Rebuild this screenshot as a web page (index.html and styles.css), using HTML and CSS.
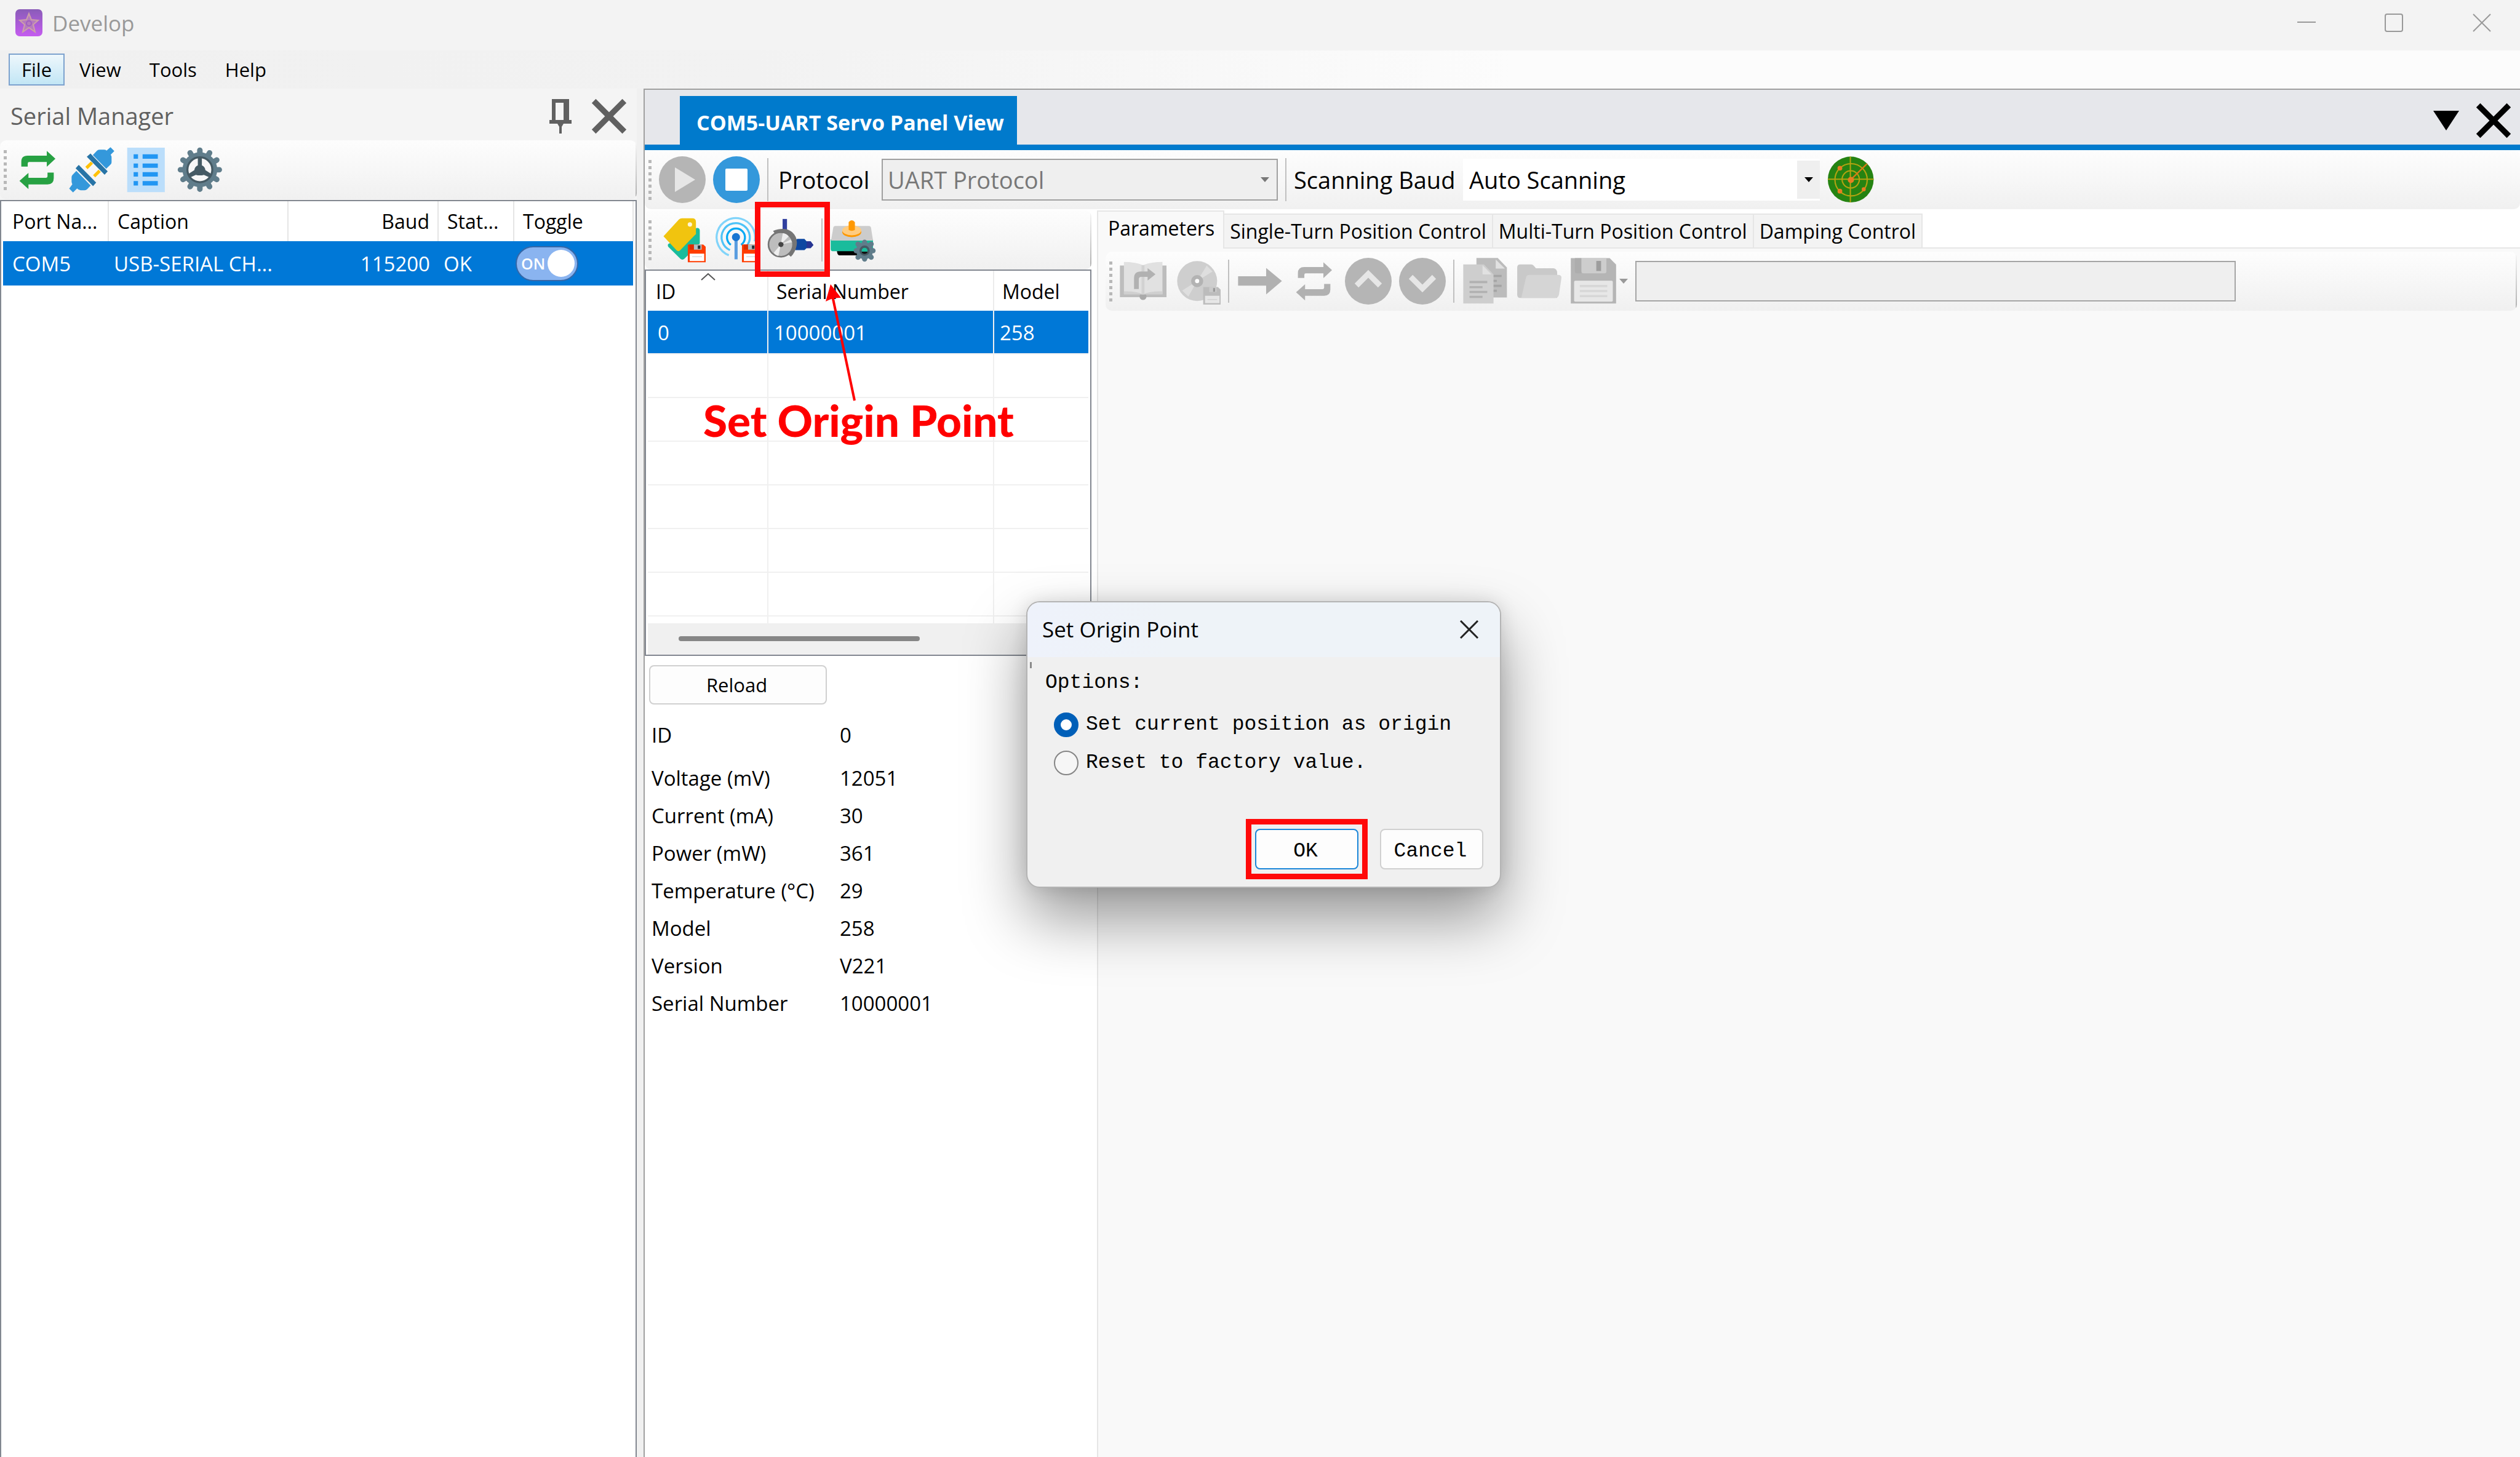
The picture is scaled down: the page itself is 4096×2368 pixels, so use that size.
FILE: index.html
```html
<!DOCTYPE html>
<html lang="en">
<head>
<meta charset="utf-8">
<title>Develop</title>
<link rel="stylesheet" href="styles.css">
</head>
<body>
<svg class="defs" aria-hidden="true">
  <symbol id="cross" viewBox="0 0 56 56"><path d="M4 4L52 52M52 4L4 52" fill="none" stroke="currentColor" stroke-width="9"/></symbol>
  <symbol id="loop" viewBox="78 49 255 255"><path d="M117 159V132Q117 99 152 99H256V73L303 116L256 160V134H160Q152 134 152 142V159ZM294 192V222Q294 256 260 256H156V281L107 237L156 193V220H252Q260 220 260 212V192Z" fill="currentColor"/></symbol>
  <symbol id="floppy" viewBox="0 0 100 98"><path d="M0 0H84L100 14V98H0Z" fill="#ff3d00"/><path d="M10 0h24v28H10z" fill="#dd2c00"/><path d="M34 0h42v28H34z" fill="#b0bec5"/><path d="M55 6h14v18H55z" fill="#263238"/><path d="M11 50h79v40H11z" fill="#fff"/><path d="M24 64h54v5H24z" fill="#cfd8dc"/></symbol>
</svg>

<header class="titlebar">
  <svg class="app-icon" viewBox="0 0 44 44"><defs><linearGradient id="ag" x1="0" y1="0" x2="0" y2="1"><stop offset="0" stop-color="#8a5cb8"/><stop offset="1" stop-color="#c55cf0"/></linearGradient></defs><rect width="44" height="44" rx="7" fill="url(#ag)"/><path d="M22 7L26 17L37 18L29 25L32 37L22 30L12 37L15 25L7 18L18 17Z" fill="#b57bbf" stroke="#cda0a8" stroke-width="2"/><circle cx="22" cy="23" r="4" fill="none" stroke="#a060c0" stroke-width="2"/></svg>
  <h1 class="app-name">Develop</h1>
  <div class="window-buttons">
    <button aria-label="Minimize"><svg viewBox="0 0 30 30"><path d="M0 14H30"/></svg></button>
    <button aria-label="Maximize"><svg viewBox="0 0 30 30"><rect x="1" y="1" width="28" height="28" rx="3"/></svg></button>
    <button aria-label="Close"><svg viewBox="0 0 30 30"><path d="M1 1L29 29M29 1L1 29"/></svg></button>
  </div>
</header>

<nav class="menubar">
  <button class="menu menu-active">File</button>
  <button class="menu">View</button>
  <button class="menu">Tools</button>
  <button class="menu">Help</button>
</nav>

<div class="workspace">
  <aside class="serial">
    <div class="dock-title">
      <h2>Serial Manager</h2>
      <button class="pin" aria-label="Pin"><svg viewBox="0 0 36 56"><path d="M7 38V3H29V38" fill="none" stroke="#606060" stroke-width="6"/><path d="M23 3h8v35h-8zM0 34h36v6H0zM13 40h10l-3 5v11h-4V45z" fill="#606060"/></svg></button>
      <button class="dock-close" aria-label="Close panel"><svg><use href="#cross"/></svg></button>
    </div>
    <div class="toolbar toolbar-edge">
      <span class="grip"></span>
      <button class="tool green" aria-label="Refresh"><svg><use href="#loop"/></svg></button>
      <button class="tool" aria-label="Connect"><svg viewBox="373 49 255 255">
        <path d="M466 160L496 131L508 143L478 173Z M508 206L538 176L550 188L520 218Z" fill="#ffc107"/>
        <path d="M507 96L530 72Q536 67 546 67H568Q576 67 582 72L603 53L624 74L604 94Q609 101 609 108V135Q609 143 603 148L580 171Z" fill="#3498db"/>
        <path d="M494 88L588 185L571 203L474 105Z" fill="#2874a6"/>
        <path d="M417 182L396 204Q391 210 391 216V240Q391 248 395 255L378 279L399 300L421 278Q430 288 440 288H462Q470 288 476 282L495 262Z" fill="#3498db"/>
        <path d="M430 150L525 246L508 265L413 168Z" fill="#2874a6"/></svg></button>
      <button class="tool" aria-label="List"><svg viewBox="668 49 255 255"><path d="M694 56h205v242H694z" fill="#bbdefb"/><path d="M729 92h24v24h-24zM778 92h83v24h-83zM729 142h24v24h-24zM778 142h83v24h-83zM729 189h24v24h-24zM778 189h83v24h-83zM729 238h24v24h-24zM778 238h83v24h-83z" fill="#2196f3"/></svg></button>
      <button class="tool" aria-label="Settings"><svg viewBox="-127 -127 255 255">
        <g stroke="#607d8b" stroke-width="30" stroke-linecap="round"><path d="M0 -106V106M-106 0H106M-53 -92L53 92M53 -92L-53 92M-92 -53L92 53M92 -53L-92 53"/></g>
        <circle r="95" fill="#607d8b"/><circle r="68" fill="#f7f7f7" stroke="#455a64" stroke-width="11"/>
        <path d="M-11 -70H11V-24Q28 -17 30 2L64 24L52 42L22 28Q0 34 -22 28L-52 42L-64 24L-30 2Q-28 -17 -11 -24Z" fill="#455a64"/></svg></button>
    </div>
    <div class="port-list">
      <table class="ports">
        <colgroup><col class="c-port"><col class="c-caption"><col class="c-baud"><col class="c-state"><col class="c-toggle"></colgroup>
        <thead><tr><th>Port Na...</th><th>Caption</th><th class="num">Baud</th><th>Stat...</th><th>Toggle</th></tr></thead>
        <tbody><tr><td>COM5</td><td>USB-SERIAL CH...</td><td class="num">115200</td><td>OK</td><td><button class="switch" role="switch" aria-checked="true"><span>ON</span><i></i></button></td></tr></tbody>
      </table>
    </div>
  </aside>

  <main class="document">
    <div class="doc-tabs">
      <button class="doc-tab">COM5-UART Servo Panel View</button>
      <div class="doc-actions">
        <button aria-label="Open documents"><svg class="tri" viewBox="0 0 42 32"><path d="M0 0H42L21 32Z"/></svg></button>
        <button aria-label="Close document"><svg class="big-x"><use href="#cross"/></svg></button>
      </div>
    </div>

    <div class="toolbar">
      <span class="grip"></span>
      <button class="tool" aria-label="Start" disabled><svg viewBox="0 0 76 76"><circle cx="38" cy="38" r="38" fill="#b5b5b5"/><path d="M26 18L59 38L26 58Z" fill="#e6e6e6"/></svg></button>
      <button class="tool" aria-label="Stop"><svg viewBox="0 0 76 76"><circle cx="38" cy="38" r="38" fill="#3498db"/><rect x="20" y="20" width="36" height="36" rx="2" fill="#fff"/></svg></button>
      <span class="sep"></span>
      <label class="big-label" for="protocol">Protocol</label>
      <span class="combo combo-disabled"><select id="protocol" disabled><option>UART Protocol</option></select><svg viewBox="0 0 14 8"><path d="M0 0H14L7 8Z" fill="#777"/></svg></span>
      <span class="sep"></span>
      <label class="big-label scan-label" for="baud">Scanning Baud</label>
      <span class="combo combo-open"><select id="baud"><option>Auto Scanning</option></select><span class="drop"><svg viewBox="0 0 14 8"><path d="M0 0H14L7 8Z"/></svg></span></span>
      <button class="tool" aria-label="Scan"><svg viewBox="247 75 255 255"><circle cx="375" cy="202" r="125" fill="#258312"/><g fill="none" stroke="#b3a311" stroke-width="7"><circle cx="377" cy="203" r="88"/><circle cx="375" cy="201" r="47"/><path d="M250 200H500M373 77V327"/></g><path d="M375 203L464 116" stroke="#d67a1a" stroke-width="8"/><g fill="#e67e22"><circle cx="376" cy="204" r="17"/><circle cx="316" cy="140" r="13"/><circle cx="316" cy="265" r="13"/><circle cx="446" cy="255" r="11"/></g></svg></button>
    </div>

    <div class="split">
      <section class="servos">
        <div class="toolbar toolbar-edge">
          <span class="grip"></span>
          <button class="tool" aria-label="Save ID"><svg viewBox="56 75 255 255"><path d="M262 137Q279 135 279 152V222L196 304Q184 315 172 304L110 243Q102 235 106 225Z" fill="#1abc9c"/><path d="M81 182L165 91Q172 84 182 84H238Q258 84 258 104V170L172 259Q162 268 152 259Z" fill="#f1c40f"/><circle cx="225" cy="118" r="12" fill="#fff6d8"/><use href="#floppy" x="213" y="227" width="100" height="98"/></svg></button>
          <button class="tool" aria-label="Save baud rate"><svg viewBox="351 75 255 255"><g fill="none" stroke-width="11"><path d="M448 229A49 49 0 1 1 504 229" stroke="#03a9f4"/><path d="M443 258A77 77 0 1 1 531 240" stroke="#4fc3f7"/><path d="M437 286A105 105 0 1 1 578 210" stroke="#81d4fa"/></g><path d="M468 190h17v118h-17z" fill="#5a9de0"/><circle cx="476" cy="187" r="22" fill="#1976d2"/><use href="#floppy" x="508" y="227" width="100" height="98"/></svg></button>
          <button class="tool marked" aria-label="Set origin point"><svg viewBox="647 75 255 255"><path d="M731 88h24v62h-24z" fill="#303f9f"/><path d="M800 202L812 197H850L862 210H884L899 230L884 247H862L850 258H800Z" fill="#0d47a1"/><path d="M862 210H884L899 230L884 247H862Z" fill="#283593"/><path d="M679 153Q745 128 783 160Q816 190 807 235Q800 270 776 294L760 280L690 170Z" fill="#757575"/><circle cx="721" cy="227" r="67" fill="#bdbdbd" stroke="#757575" stroke-width="9"/><path d="M721 227L732 166Q752 168 764 183ZM721 227L708 290Q692 286 683 272Z" fill="#eee"/><path d="M721 227L775 200L783 215Z" fill="#e6e6e6"/><circle cx="722" cy="227" r="14" fill="#444"/></svg></button>
          <span class="sep"></span>
          <button class="tool" aria-label="Device settings"><svg viewBox="996 75 255 255"><path d="M1034 262H1150V286H1046Q1036 284 1034 262Z" fill="#000"/><path d="M1000 200H1231V256Q1230 264 1220 264H1010Q1000 262 1000 252Z" fill="#1abc9c"/><path d="M1002 206L1014 136Q1016 126 1026 126H1208Q1218 126 1220 136L1231 206Z" fill="#ccc"/><ellipse cx="1115" cy="160" rx="52" ry="27" fill="#ff9800"/><ellipse cx="1115" cy="150" rx="52" ry="27" fill="#ffcc80"/><path d="M1098 105Q1115 85 1132 105V148Q1115 158 1098 148Z" fill="#ff9800"/><g transform="translate(1185 261)"><path d="M0 -46V46M-46 0H46M-36 -36L36 36M36 -36L-36 36" stroke="#607d8b" stroke-width="28" stroke-linecap="round"/><circle r="46" fill="#607d8b"/><circle r="22" fill="#1abc9c" stroke="#455a64" stroke-width="12"/><path d="M-15 5H15V12Q0 24 -15 12Z" fill="#111"/></g></svg></button>
        </div>
        <div class="servo-list">
          <table class="servo-table">
            <colgroup><col class="c-id"><col class="c-serial"><col></colgroup>
            <thead><tr><th class="sorted">ID<svg class="caret" viewBox="0 0 24 12"><path d="M1 11L12 1L23 11" fill="none" stroke="#555" stroke-width="2"/></svg></th><th>Serial Number</th><th>Model</th></tr></thead>
            <tbody>
              <tr class="selected"><td>0</td><td>10000001</td><td>258</td></tr>
              <tr><td></td><td></td><td></td></tr><tr><td></td><td></td><td></td></tr><tr><td></td><td></td><td></td></tr><tr><td></td><td></td><td></td></tr><tr><td></td><td></td><td></td></tr><tr><td></td><td></td><td></td></tr>
              <tr class="partial"><td></td><td></td><td></td></tr>
            </tbody>
          </table>
          <div class="scroll"><span></span></div>
        </div>
        <div class="details">
          <button class="push reload">Reload</button>
          <dl>
            <div class="first"><dt>ID</dt><dd>0</dd></div>
            <div><dt>Voltage (mV)</dt><dd>12051</dd></div>
            <div><dt>Current (mA)</dt><dd>30</dd></div>
            <div><dt>Power (mW)</dt><dd>361</dd></div>
            <div><dt>Temperature (°C)</dt><dd>29</dd></div>
            <div><dt>Model</dt><dd>258</dd></div>
            <div><dt>Version</dt><dd>V221</dd></div>
            <div><dt>Serial Number</dt><dd>10000001</dd></div>
          </dl>
        </div>
        <div class="callout">
          <svg viewBox="0 0 60 192"><path d="M12 20L48 190" stroke="#f00" stroke-width="4"/><path d="M9 1L26 23Q13 22 1 29Z" fill="#f00"/></svg>
          <strong>Set Origin Point</strong>
        </div>
      </section>

      <section class="control">
        <div class="tabs" role="tablist">
          <button class="tab tab-active" role="tab" aria-selected="true">Parameters</button>
          <button class="tab" role="tab">Single-Turn Position Control</button>
          <button class="tab" role="tab">Multi-Turn Position Control</button>
          <button class="tab" role="tab">Damping Control</button>
        </div>
        <div class="tab-page">
          <div class="toolbar toolbar-edge">
            <span class="grip"></span>
            <button class="tool" aria-label="Read" disabled><svg viewBox="109 57 255 255"><path d="M110 99h255v173H110z" fill="#bdbdbd"/><circle cx="236" cy="268" r="19" fill="#aaa"/><path d="M132 80Q190 80 236 97Q282 80 342 80V256H132Z" fill="#e1e1e1"/><path d="M132 240Q200 238 236 256Q272 238 342 240V256H132Z" fill="#d0d0d0"/><path d="M228 97h16v160h-16z" fill="#d2d2d2"/><path d="M187 227V168Q187 132 224 132H261V113L304 147L261 181V161H226Q213 161 213 174V227Z" fill="#b1b1b1"/></svg></button>
            <button class="tool" aria-label="Burn" disabled><svg viewBox="405 57 255 255"><circle cx="532" cy="184" r="109" fill="#cecece"/><path d="M532 184L584 100L616 132ZM532 184L450 236L484 268Z" fill="#dedede"/><circle cx="532" cy="184" r="22" fill="#f7f7f7" stroke="#b3b3b3" stroke-width="22"/><circle cx="532" cy="184" r="11" fill="#fff"/><path d="M565 216H645L663 234V314H565Z" fill="#bcbcbc"/><path d="M598 216h40v28h-40z" fill="#cacaca"/><path d="M619 222h11v20h-11z" fill="#999"/><path d="M575 264h79v40h-79z" fill="#e6e6e6"/><path d="M588 282h53v5h-53z" fill="#d2d2d2"/></svg></button>
            <span class="sep"></span>
            <button class="tool" aria-label="Run once" disabled><svg viewBox="754 57 255 255"><path d="M762 158H915V112L1001 184L915 257V209H762Z" fill="#b1b1b1"/></svg></button>
            <button class="tool gray" aria-label="Repeat" disabled><svg><use href="#loop"/></svg></button>
            <button class="tool" aria-label="Move up" disabled><svg viewBox="0 0 76 76"><circle cx="38" cy="38" r="38" fill="#b5b5b5"/><path d="M19 45L38 26L57 45" fill="none" stroke="#e6e6e6" stroke-width="9"/></svg></button>
            <button class="tool" aria-label="Move down" disabled><svg viewBox="0 0 76 76"><circle cx="38" cy="38" r="38" fill="#b5b5b5"/><path d="M19 31L38 50L57 31" fill="none" stroke="#e6e6e6" stroke-width="9"/></svg></button>
            <span class="sep"></span>
            <button class="tool" aria-label="Copy" disabled><svg viewBox="479 57 255 255"><path d="M559 58H675L725 110V273H559Z" fill="#bcbcbc"/><path d="M664 66V116H714Z" fill="#e1e1e1"/><path d="M640 150h56v12h-56zM640 177h30v12h-30zM640 204h56v12h-56zM640 231h30v12h-30z" fill="#a5a5a5"/><path d="M487 93H600L652 148V306H487Z" fill="#cecece"/><path d="M592 97V148H641Z" fill="#e1e1e1"/><path d="M521 183h97v12h-97zM521 211h71v12h-71zM521 237h97v12h-97zM521 264h71v12h-71z" fill="#b1b1b1"/></svg></button>
            <button class="tool" aria-label="Open" disabled><svg viewBox="779 57 255 255"><path d="M786 110Q786 93 803 93H862Q870 93 876 100L888 114H984Q1003 116 1004 140V276H803Q786 276 786 258Z" fill="#c9c9c9"/><path d="M834 164Q838 150 852 150H1008Q1029 150 1027 168L1014 256Q1010 276 992 276H808Z" fill="#d5d5d5"/></svg></button>
            <span class="split-button">
              <button class="tool" aria-label="Save" disabled><svg viewBox="1068 57 255 255"><path d="M1072 59H1284L1319 94V306H1072Z" fill="#b5b5b5"/><path d="M1094 59h36v83h-24q-12 0-12-12z" fill="#adadad"/><path d="M1130 59H1266V132Q1266 142 1256 142H1142Q1130 142 1130 130Z" fill="#cdcdcd"/><path d="M1211 74h26v55h-26z" fill="#9d9d9d"/><rect x="1090" y="182" width="211" height="114" rx="6" fill="#e7e7e7"/><path d="M1121 205h150v12h-150zM1121 232h150v12h-150zM1121 260h150v12h-150z" fill="#d7d7d7"/></svg></button>
              <svg class="mini" viewBox="0 0 14 8"><path d="M0 0H14L7 8Z" fill="#999"/></svg>
            </span>
            <input class="path" type="text" aria-label="File path" disabled>
          </div>
        </div>
      </section>
    </div>
  </main>
</div>

<section class="dialog" role="dialog" aria-labelledby="dlg-title">
  <header>
    <h2 id="dlg-title">Set Origin Point</h2>
    <button aria-label="Close dialog"><svg viewBox="0 0 30 30"><path d="M1 1L29 29M29 1L1 29"/></svg></button>
  </header>
  <fieldset>
    <legend>Options:</legend>
    <label><input type="radio" name="origin" checked>Set current position as origin</label>
    <label><input type="radio" name="origin">Reset to factory value.</label>
  </fieldset>
  <footer>
    <span class="ring"><button class="push push-default">OK</button></span>
    <button class="push">Cancel</button>
  </footer>
</section>
</body>
</html>
```
FILE: styles.css
```css
* { box-sizing: border-box; }
body {
  margin: 0;
  height: 100vh;
  display: flex;
  flex-direction: column;
  overflow: hidden;
  position: relative;
  background: #f0f0f0;
  color: #000;
  font: 32px "Open Sans", "Noto Sans", sans-serif;
}
button, select, input { font: inherit; color: inherit; }
button { background: none; border: 0; padding: 0; margin: 0; }
h1, h2, dl, dd { margin: 0; font-weight: 400; }
svg { display: block; }
.defs { position: absolute; width: 0; height: 0; }

/* window frame */
.titlebar {
  flex: none;
  height: 82px;
  display: flex;
  align-items: center;
  padding: 0 24px 8px 25px;
  gap: 16px;
  background: #f3f3f3;
  color: #999;
}
.app-icon { width: 44px; height: 44px; }
.app-name { font-size: 35px; }
.window-buttons { margin-left: auto; display: flex; }
.window-buttons button { width: 142px; height: 74px; display: grid; place-items: center; }
.window-buttons button:last-child { width: 76px; margin-left: 34px; }
.window-buttons svg { width: 30px; height: 30px; fill: none; stroke: #999; stroke-width: 2; }

.menubar {
  flex: none;
  height: 62px;
  display: flex;
  align-items: center;
  gap: 2px;
  padding: 0 14px;
  font-size: 31px;
  background: linear-gradient(90deg, #f0f0f0, #f2f2f2 30%, #fcfcfc 60%);
}
.menu { height: 52px; padding: 0 20px; border: 2px solid transparent; }
.menu-active { border-color: #7da2ce; background: linear-gradient(#eef7fc, #c2e6f5); padding: 0 19px; }

.workspace { flex: 1; min-height: 0; display: grid; grid-template-columns: 1035px 1fr; column-gap: 11px; }

/* toolbars */
.toolbar {
  flex: none;
  height: 96px;
  display: flex;
  align-items: center;
  gap: 12px;
  padding: 0 6px;
  border-radius: 10px;
  background: linear-gradient(#fdfdfd, #f7f7f7 50%, #f0f0f0);
}
.toolbar-edge {
  background:
    linear-gradient(#f4f4f4, #b0b0b0) right / 2px 86px no-repeat,
    linear-gradient(#fdfdfd, #f7f7f7 50%, #f0f0f0);
}
.grip { width: 5px; height: 65px; background: repeating-linear-gradient(#b8b8b8 0 5px, transparent 5px 10px); }
.tool { flex: none; width: 76px; height: 76px; position: relative; }
.tool svg { width: 76px; height: 76px; }
.green { color: #27a143; }
.gray { color: #b1b1b1; }
.sep { flex: none; width: 2px; height: 70px; background: #c0c0c0; }

/* serial manager */
.serial { display: flex; flex-direction: column; min-height: 0; background: #f4f4f4; }
.dock-title { height: 84px; display: flex; align-items: center; padding: 6px 16px 0 17px; color: #606060; }
.dock-title h2 { font-size: 38px; line-height: 48px; flex: 1; padding-bottom: 3px; }
.pin svg { width: 36px; height: 56px; }
.dock-close { margin-left: 32px; }
.dock-close svg { width: 58px; height: 58px; }
.port-list { flex: 1; margin-top: 1px; background: #fff; border: 2px solid #828790; border-bottom: 0; padding: 0 3px; }

table { border-collapse: collapse; table-layout: fixed; width: 100%; }
th, td { font-weight: 400; text-align: left; padding: 0; white-space: nowrap; overflow: hidden; }
.ports .num { text-align: right; padding-right: 13px; }
.c-port { width: 171px; }
.c-caption { width: 292px; }
.c-baud { width: 244px; }
.c-state { width: 123px; }
.ports th { height: 65px; padding-left: 14px; border-right: 2px solid #e5e5e5; }
.ports td { height: 72px; padding-left: 9px; color: #fff; background: #0078d7; font-size: 33px; }
.ports th:first-child, .ports td:first-child { padding-left: 15px; }
.ports td:last-child { padding-left: 3px; }
.switch {
  width: 102px;
  height: 57px;
  display: flex;
  align-items: center;
  justify-content: space-between;
  padding: 0 4px 0 7px;
  border: 2px solid #3567a8;
  border-radius: 29px;
  background: #8ab4f0;
  font-size: 25px;
  font-weight: 600;
  color: #fff;
}
.switch i { width: 44px; height: 44px; border-radius: 50%; background: #fff; }

/* document area */
.document { min-width: 0; min-height: 0; display: flex; flex-direction: column; background: #fff; border-left: 2px solid #a0a0a0; border-top: 2px solid #a0a0a0; }
.doc-tabs { flex: none; height: 98px; display: flex; align-items: stretch; background: #e6e7eb; border-bottom: 9px solid #007acc; padding: 10px 14px 0 57px; }
.doc-tab { background: #007acc; color: #fff; font-size: 34px; font-weight: 700; width: 548px; padding: 7px 0 0 6px; white-space: nowrap; }
.doc-actions { margin-left: auto; display: flex; align-items: center; gap: 27px; }
.tri { width: 42px; height: 32px; }
.big-x { width: 58px; height: 58px; }
.big-label { flex: none; font-size: 38px; margin-left: 4px; white-space: nowrap; width: 156px; }
.scan-label { margin-left: 0; width: 263px; }
.combo { position: relative; display: grid; align-items: center; font-size: 38px; height: 68px; }
.combo > * { grid-area: 1 / 1; }
.combo select { appearance: none; width: 100%; height: 68px; border: 0; background: none; padding: 0 8px; opacity: 1; }
.combo svg { width: 14px; height: 8px; justify-self: end; }
.combo-disabled { width: 644px; border: 2px solid #a0a0a0; background: #efefef; color: #787878; }
.combo-disabled select { height: 64px; }
.combo-disabled svg { margin-right: 12px; }
.combo-open { width: 580px; background: #fff; }
.combo-open select { padding: 0 10px; }
.drop { width: 37px; height: 62px; background: #efefef; justify-self: end; display: grid; place-items: center; }
.drop svg { justify-self: center; }

.split { flex: 1; min-height: 0; display: grid; grid-template-columns: 726px 1fr; column-gap: 9px; padding-top: 2px; }
.servos { position: relative; }

.marked { z-index: 2; }
.marked::after { content: ""; position: absolute; inset: -24px -26px -22px -20px; border: 9px solid #ff0909; }

.servo-list { border: 2px solid #828790; padding: 0 3px; }
.c-id { width: 195px; }
.c-serial { width: 367px; }
.servo-table th { height: 65px; padding: 2px 0 0 13px; border-right: 2px solid #ececec; position: relative; }
.servo-table th:last-child { border-right: 0; }
.servo-table td { height: 71px; padding-left: 9px; border-right: 2px solid #f0f0f0; border-bottom: 2px solid #f0f0f0; }
.servo-table .selected td { height: 70px; font-size: 33px; padding-top: 2px; }
.servo-table td:last-child { border-right: 0; }
.servo-table td:first-child { padding-left: 16px; }
.servo-table .selected td { background: #0078d7; color: #fff; }
.servo-table .partial td { height: 12px; border-bottom: 0; }
.caret { position: absolute; top: 4px; right: 84px; width: 24px; height: 12px; }
.scroll { height: 51px; background: #f0f0f0; display: flex; align-items: center; padding-bottom: 2px; }
.scroll span { width: 392px; height: 8px; margin-left: 50px; border-radius: 4px; background: #868686; }

.push { border: 2px solid #d0d0d0; border-radius: 8px; background: #fdfdfd; }
.details { padding: 15px 7px; }
.reload { display: block; width: 289px; height: 64px; font-size: 31px; padding-right: 4px; }
.details dl { padding: 14px 4px; font-size: 33px; }
.details dl div { display: grid; grid-template-columns: 306px 1fr; height: 61px; align-items: center; }
.details dl .first { height: 75px; padding-bottom: 5px; }

.callout { position: absolute; left: 0; right: 0; top: 119px; pointer-events: none; z-index: 3; color: #f00; }
.callout svg { width: 60px; height: 192px; margin-left: 293px; }
.callout strong { display: block; margin-left: 95px; font: 900 71px/60px Lato, sans-serif; white-space: nowrap; }

/* control tabs */
.control { min-width: 0; display: flex; flex-direction: column; }
.tabs { display: flex; align-items: flex-end; height: 60px; }
.tab { height: 55px; padding: 0 9px; background: #f3f3f3; border: 2px solid #e6e6e6; border-left: 0; border-bottom: 0; white-space: nowrap; }
.tab-active { height: 62px; margin-bottom: -2px; padding: 0 14px 7px 16px; background: #f9f9f9; border-left: 2px solid #e6e6e6; position: relative; }
.tab-page { flex: 1; border-left: 2px solid #e6e6e6; border-top: 2px solid #e6e6e6; background: #f9f9f9; padding: 5px 5px 0 12px; }
.split-button { display: flex; align-items: center; gap: 4px; }
.mini { width: 14px; height: 8px; }
.path { width: 976px; height: 66px; border: 2px solid #a5a5a5; background: #efefef; padding: 0 10px; }

/* dialog window */
.dialog {
  position: absolute;
  left: 1668px;
  top: 977px;
  width: 772px;
  border: 2px solid #b4b4b4;
  border-radius: 22px;
  background: #f0f0f0;
  box-shadow: 0 50px 100px rgba(0, 0, 0, .4), 0 0 30px rgba(0, 0, 0, .12);
  overflow: hidden;
  z-index: 5;
  font: 33px "Liberation Mono", monospace;
}
.dialog header { height: 89px; display: flex; align-items: center; justify-content: space-between; padding: 0 35px 2px 24px; background: linear-gradient(90deg, #eef2fb, #eef3f8 30%); font-family: "Open Sans", sans-serif; }
.dialog h2 { font-size: 35px; }
.dialog header svg { width: 30px; height: 30px; fill: none; stroke: #222; stroke-width: 3; }
.dialog fieldset { position: relative; border: 0; margin: 0; padding: 22px 29px 0; }
.dialog fieldset::before { content: ""; position: absolute; left: 4px; top: 8px; width: 3px; height: 10px; background: #8a8a8a; }
.dialog legend { padding: 0; line-height: 40px; float: left; width: 100%; margin-bottom: 17px; }
.dialog label { clear: both; display: flex; align-items: center; gap: 12px; height: 62px; padding-left: 14px; line-height: 40px; white-space: nowrap; }
.dialog input { appearance: none; flex: none; width: 40px; height: 40px; margin: 0; border: 2px solid #858585; border-radius: 50%; background: #f6f6f6; }
.dialog input:checked { border: 11px solid #005fb8; background: #fff; }
.dialog footer { display: flex; justify-content: flex-end; align-items: center; gap: 20px; padding: 60px 27px 12px 0; }
.dialog .push { width: 168px; height: 66px; padding: 6px 4px 0 0; }
.ring { padding: 7px 6px; border: 9px solid #ff0909; height: 98px; }
.dialog .push-default { border-color: #1a86d9; }
```
